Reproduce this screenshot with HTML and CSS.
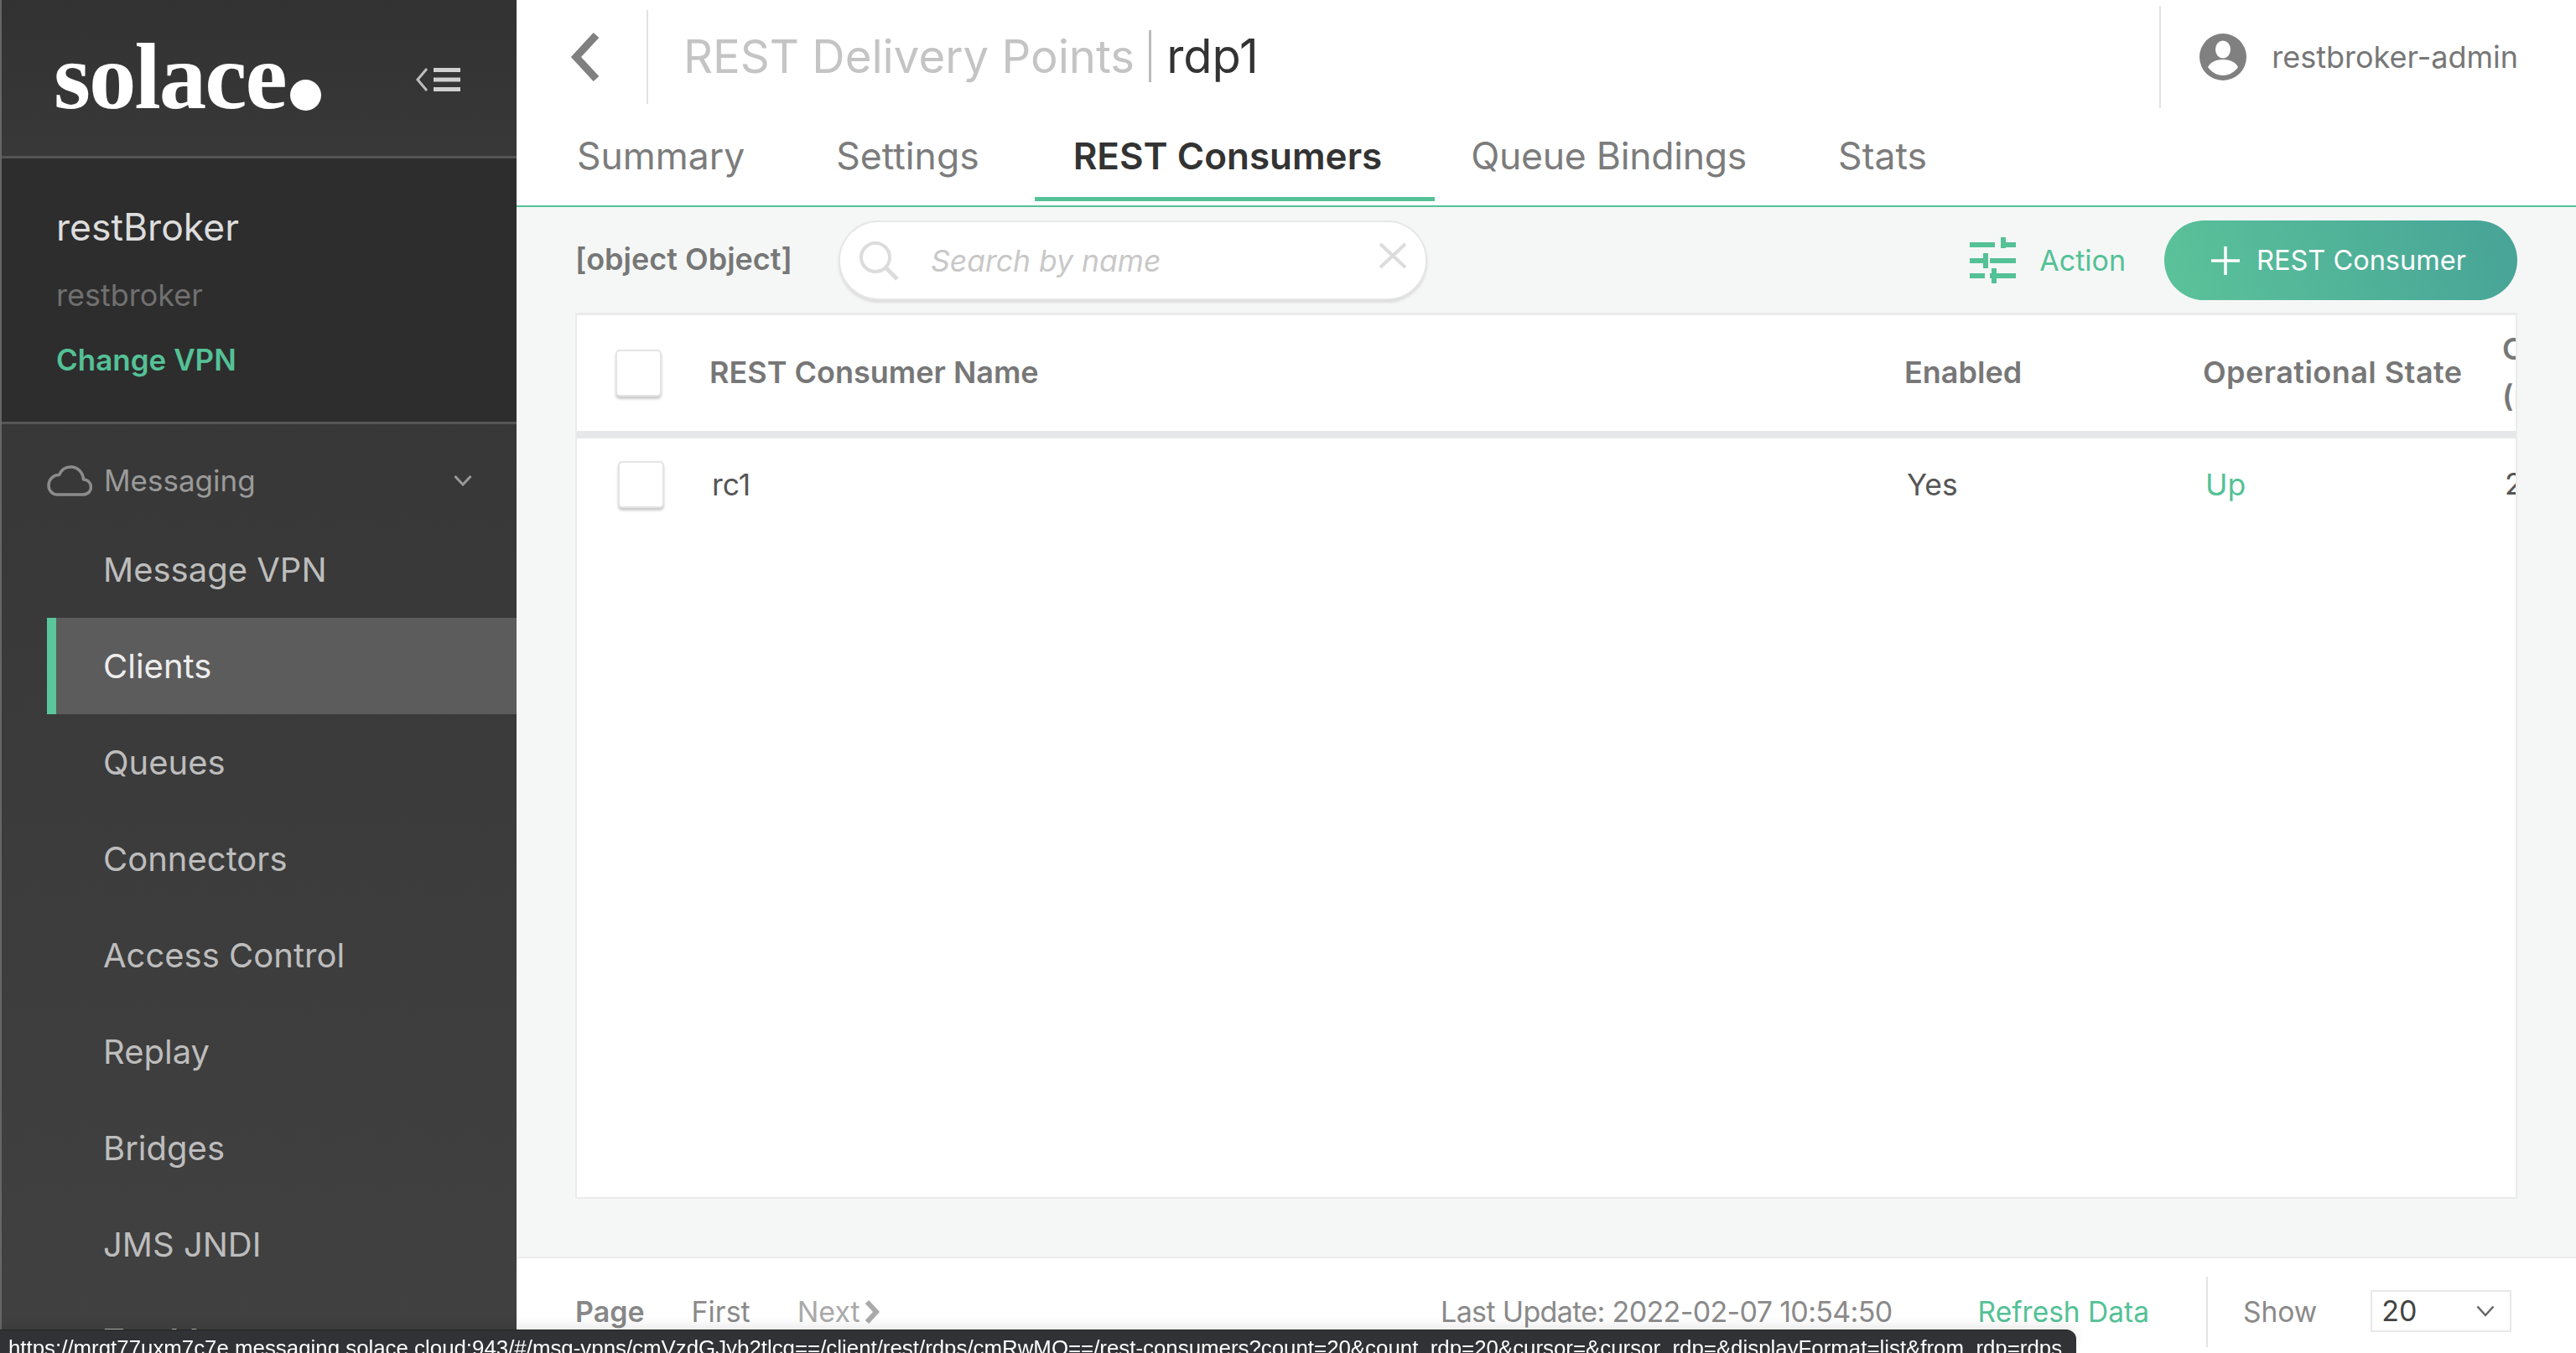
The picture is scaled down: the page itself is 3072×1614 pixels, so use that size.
FILE: index.html
```html
<!DOCTYPE html>
<html lang="en">
<head>
<meta charset="utf-8">
<title>REST Consumers</title>
<link rel="stylesheet" href="styles.css">
</head>
<body>
<div class="app">
  <aside class="sidebar">
    <div class="brand">
      <div class="logo"><span class="logo-word">solace</span><span class="logo-dot"></span></div>
      <svg class="collapse" viewBox="0 0 54 28" width="54" height="28"><path d="M14 1 3 14l11 13" fill="none" stroke="#bdbdbd" stroke-width="3"/><path d="M22 2.500h32M22 14h32M22 25.500h32" fill="none" stroke="#d0d0d0" stroke-width="5"/></svg>
    </div>
    <div class="broker">
      <div class="broker-name">restBroker</div>
      <div class="broker-id">restbroker</div>
      <div class="broker-change">Change VPN</div>
    </div>
    <nav class="nav">
      <div class="nav-group">
        <svg class="cloud" viewBox="0 0 54 37" width="54" height="37"><path d="M12 35h31c5.500 0 9.500-4 9.500-9s-4-9-9-9c-.5-8-6.500-15-15-15-6.500 0-11.500 3.500-14 9.500C8 11 2 17 2 24c0 6 4.500 11 10 11Z" fill="none" stroke="#8c8c8c" stroke-width="3.500" stroke-linejoin="round"/></svg>
        <span class="nav-group-label">Messaging</span>
        <svg class="nav-chevron" viewBox="0 0 22 14" width="22" height="14"><path d="m1.500 2 9.500 10 9.500-10" fill="none" stroke="#999" stroke-width="3"/></svg>
      </div>
      <a class="nav-item">Message VPN</a>
      <a class="nav-item nav-item-active">Clients</a>
      <a class="nav-item">Queues</a>
      <a class="nav-item">Connectors</a>
      <a class="nav-item">Access Control</a>
      <a class="nav-item">Replay</a>
      <a class="nav-item">Bridges</a>
      <a class="nav-item">JMS JNDI</a>
      <a class="nav-item">Try-Me</a>
    </nav>
  </aside>
  <main class="main">
    <header class="topbar">
      <div class="back"><svg viewBox="0 0 36 58" width="36" height="58"><path d="M31 3 7 29l24 26" fill="none" stroke="#808080" stroke-width="9"/></svg></div>
      <h1 class="title"><span class="title-parent">REST Delivery Points</span><span class="title-sep"></span><span class="title-current">rdp1</span></h1>
      <div class="user">
        <svg class="avatar" viewBox="0 0 56 56" width="56" height="56"><circle cx="28" cy="28" r="28" fill="#808080"/><ellipse cx="28" cy="19" rx="9" ry="10.500" fill="#fff"/><path d="M10 40c3-6 10-9 18-9s15 3 18 9c-4 6-11 10-18 10s-14-4-18-10Z" fill="#fff"/></svg>
        <span class="user-name">restbroker-admin</span>
      </div>
    </header>
    <div class="tabs">
      <a class="tab">Summary</a>
      <a class="tab">Settings</a>
      <a class="tab tab-active">REST Consumers</a>
      <a class="tab tab-tight">Queue Bindings</a>
      <a class="tab">Stats</a>
    </div>
    <section class="content">
      <div class="toolbar">
        <span class="count">[object Object]</span>
        <div class="search">
          <svg class="search-icon" viewBox="0 0 48 48" width="48" height="48"><circle cx="20" cy="20" r="17" fill="none" stroke="#dcdcdc" stroke-width="4"/><path d="m32 32 14 14" fill="none" stroke="#dcdcdc" stroke-width="5"/></svg>
          <span class="search-placeholder">Search by name</span>
          <svg class="search-clear" viewBox="0 0 34 32" width="34" height="32"><path d="m2 2 30 28M32 2 2 30" fill="none" stroke="#dcdcdc" stroke-width="4"/></svg>
        </div>
        <div class="action">
          <svg viewBox="0 0 55 55" width="55" height="55"><g fill="#54c196"><path d="M0 6h30v6H0zM37 6h18v6H37zM37 0h6v13h-6zM0 25h18v6H0zM24 25h31v6H24zM16 19h6v18h-6zM0 43h18v6H0zM24 43h31v6H24zM26 37h6v18h-6z"/></g></svg>
          <span>Action</span>
        </div>
        <button class="add"><svg viewBox="0 0 34 34" width="34" height="34"><path d="M17 0v34M0 17h34" stroke="#fff" stroke-width="3.500" fill="none"/></svg><span>REST Consumer</span></button>
      </div>
      <div class="table">
        <div class="row row-head">
          <div class="cell cell-check"><span class="check"></span></div>
          <div class="cell cell-name">REST Consumer Name</div>
          <div class="cell cell-enabled">Enabled</div>
          <div class="cell cell-state">Operational State</div>
          <div class="cell cell-extra">Connection<br>(ms)</div>
        </div>
        <div class="row row-body">
          <div class="cell cell-check"><span class="check"></span></div>
          <div class="cell cell-name">rc1</div>
          <div class="cell cell-enabled">Yes</div>
          <div class="cell cell-state state-up">Up</div>
          <div class="cell cell-extra">2</div>
        </div>
      </div>
    </section>
    <footer class="footer">
      <strong class="page-label">Page</strong>
      <span class="page-link">First</span>
      <span class="page-next">Next<svg viewBox="0 0 20 30" width="20" height="30"><path d="m4 3 11 12L4 27" fill="none" stroke="#aaa" stroke-width="6"/></svg></span>
      <span class="updated">Last Update: 2022-02-07 10:54:50</span>
      <span class="refresh">Refresh Data</span>
      <div class="show">
        <span class="show-label">Show</span>
        <div class="select"><span>20</span><svg viewBox="0 0 22 14" width="22" height="14"><path d="m1.500 1.500 9.500 10.500 9.500-10.500" fill="none" stroke="#666" stroke-width="2.500"/></svg></div>
      </div>
    </footer>
  </main>
</div>
<div class="statusbar">https://mrgt77uxm7c7e.messaging.solace.cloud:943/#/msg-vpns/cmVzdGJyb2tlcg==/client/rest/rdps/cmRwMQ==/rest-consumers?count=20&amp;count_rdp=20&amp;cursor=&amp;cursor_rdp=&amp;displayFormat=list&amp;from_rdp=rdps</div>
</body>
</html>
```

FILE: styles.css
```css
* { box-sizing: border-box; }
html, body { margin: 0; height: 100%; overflow: hidden; }
body { font-family: Inter, "Noto Sans", sans-serif; color: #555; background: #fff; }
.app { display: flex; height: 100vh; overflow: hidden; }

.sidebar { flex: 0 0 616px; display: flex; flex-direction: column; border-left: 2px solid #666; background: linear-gradient(#333, #414141); overflow: hidden; }
.brand { flex: 0 0 189px; display: flex; align-items: center; justify-content: space-between; padding: 0 65px 0 62px; background: linear-gradient(#323232, #383838); border-bottom: 3px solid #555; }
.logo { display: flex; align-items: flex-end; height: 78px; margin-top: 0; }
.logo-word { font-family: "Liberation Serif", serif; font-weight: 700; font-size: 113px; line-height: 78px; letter-spacing: -2px; color: #fff; height: 78px; position: relative; top: -2px; }
.logo-dot { width: 37px; height: 37px; border-radius: 50%; background: #fff; margin-left: 5px; }
.collapse { margin-top: 3px; margin-right: 2px; }
.broker { flex: 0 0 317px; padding: 57px 0 0 65px; background: #2d2d2d; border-bottom: 3px solid #565656; }
.broker-name { font-size: 44.500px; line-height: 50px; color: #ddd; }
.broker-id { font-size: 36px; line-height: 42px; margin-top: 35px; color: #707070; }
.broker-change { font-size: 35px; line-height: 44px; margin-top: 34px; font-weight: 600; color: #54c196; }
.nav { flex: 1; display: flex; flex-direction: column; }
.nav-group { flex: 0 0 116px; display: flex; align-items: center; padding: 18px 0 0 54px; }
.nav-group-label { font-size: 35px; color: #9a9a9a; margin-left: 14px; }
.nav-chevron { margin-left: auto; margin-right: 53px; }
.nav-item { flex: 0 0 115px; display: flex; align-items: center; padding-left: 121px; font-size: 40px; color: #bdbdbd; }
.nav-item-active { margin-left: 54px; padding-left: 56px; border-left: 11px solid #5ac69b; background: #5c5c5c; color: #eee; }

.main { flex: 1; min-width: 0; display: flex; flex-direction: column; }
.topbar { flex: 0 0 131px; display: flex; align-items: flex-start; }
.back { width: 157px; height: 112px; margin-top: 12px; padding-left: 64px; display: flex; align-items: center; border-right: 2px solid #e2e2e2; flex: none; }
.title { margin: 0; padding: 2px 0 0 42px; height: 131px; display: flex; align-items: center; font-weight: 400; font-size: 54.500px; }
.title-parent { color: #c4c4c4; }
.title-sep { width: 3px; height: 62px; background: #bbb; margin: 0 18px 0 17px; }
.title-current { color: #333; font-size: 56px; }
.user { margin-left: auto; height: 122px; margin-top: 7px; padding: 0 69px 0 46px; display: flex; align-items: center; border-left: 2px solid #e2e2e2; }
.user-name { margin-left: 30px; font-size: 36px; color: #777; }

.tabs { flex: 0 0 116px; display: flex; align-items: stretch; padding-left: 26px; border-bottom: 2px solid #54c196; }
.tab { padding: 27px 63px 0 46px; height: 109px; font-size: 44.500px; line-height: 56px; color: #7c7c7c; }
.tab-active { color: #333; font-weight: 600; font-size: 44px; margin: 0 -3px 0 3px; border-bottom: 5px solid #54c196; }
.tab-tight { letter-spacing: -.25px; }

.content { flex: 1; min-height: 0; display: flex; flex-direction: column; padding: 0 70px 69px 70px; background: #f5f7f6; border-bottom: 2px solid #ececec; }
.toolbar { flex: 0 0 126px; display: flex; align-items: flex-start; padding-top: 16px; }
.count { flex: 0 0 314px; font-size: 36px; font-weight: 600; color: #777; line-height: 92px; white-space: nowrap; }
.search { width: 702px; height: 95px; display: flex; align-items: center; padding: 0 22px 0 22px; background: #fff; border: 2px solid #e6e6e6; border-radius: 48px; box-shadow: 0 3px 3px #ddd; }
.search-placeholder { margin: 2px 0 0 38px; font-size: 35.500px; font-style: italic; color: #c8c8c8; }
.search-clear { margin-left: auto; margin-top: -12px; }
.action { margin-left: auto; display: flex; align-items: center; height: 95px; gap: 28px; color: #54c196; font-size: 34px; }
.add { margin-left: 46px; width: 421px; height: 95px; border: 0; border-radius: 48px; display: flex; align-items: center; gap: 20px; padding: 0 0 0 56px; background: linear-gradient(70deg, #5bc39a, #47a397); color: #fff; font-family: inherit; font-size: 32.500px; }

.table { flex: 1; background: #fff; border: 2px solid #ebebeb; border-top-width: 3px; overflow: hidden; }
.row { display: flex; align-items: center; }
.row-head { height: 147px; padding-bottom: 2px; border-bottom: 9px solid #e6e7e9; font-size: 36px; font-weight: 600; color: #777; }
.row-head .cell-check { margin-top: 2px; }
.row-head .cell-state { letter-spacing: .45px; }
.row-body { height: 110px; font-size: 35.500px; color: #555; padding-left: 3px; }
.cell { flex: none; }
.cell-check { width: 158px; padding-left: 46px; display: flex; }
.check { width: 55px; height: 56px; background: #fff; border: 2px solid #e4e4e4; border-radius: 5px; box-shadow: 0 3px 3px #ccc; }
.cell-name { width: 1425px; }
.cell-enabled { width: 356px; }
.cell-state { width: 357px; }
.cell-extra { line-height: 56px; white-space: nowrap; }
.state-up { color: #54c196; }

.footer { flex: 0 0 113px; display: flex; align-items: flex-start; padding: 0 0 0 70px; font-size: 34px; color: #8a8a8a; line-height: 44px; background: #fff; }
.footer > * { margin-top: 42px; }
.page-label { font-weight: 600; color: #888; }
.page-link { margin-left: 56px; }
.page-next { margin-left: 56px; color: #aaa; display: flex; align-items: center; gap: 4px; }
.updated { margin-left: auto; letter-spacing: -.65px; }
.refresh { margin-left: 102px; color: #54c196; font-size: 33.500px; }
.show { margin: 22px 0 0 68px; height: 84px; width: 441px; display: flex; align-items: flex-start; padding: 0 0 0 42px; border-left: 2px solid #e4e4e4; }
.show-label { margin-top: 20px; font-size: 33.500px; }
.select { margin: 16px 0 0 64px; width: 168px; height: 50px; display: flex; align-items: center; justify-content: space-between; padding: 0 18px 0 11px; border: 2px solid #e8e8e8; color: #444; }

.statusbar { position: fixed; left: 0; bottom: 0; width: 2476px; height: 28px; padding: 7px 0 0 10px; background: #313236; border-top: 1px solid #222; border-top-right-radius: 12px; color: #fff; font-family: "Liberation Sans", sans-serif; font-size: 25.850px; line-height: 28px; white-space: nowrap; overflow: hidden; box-shadow: 0 -6px 12px rgba(0,0,0,.08); }
```
